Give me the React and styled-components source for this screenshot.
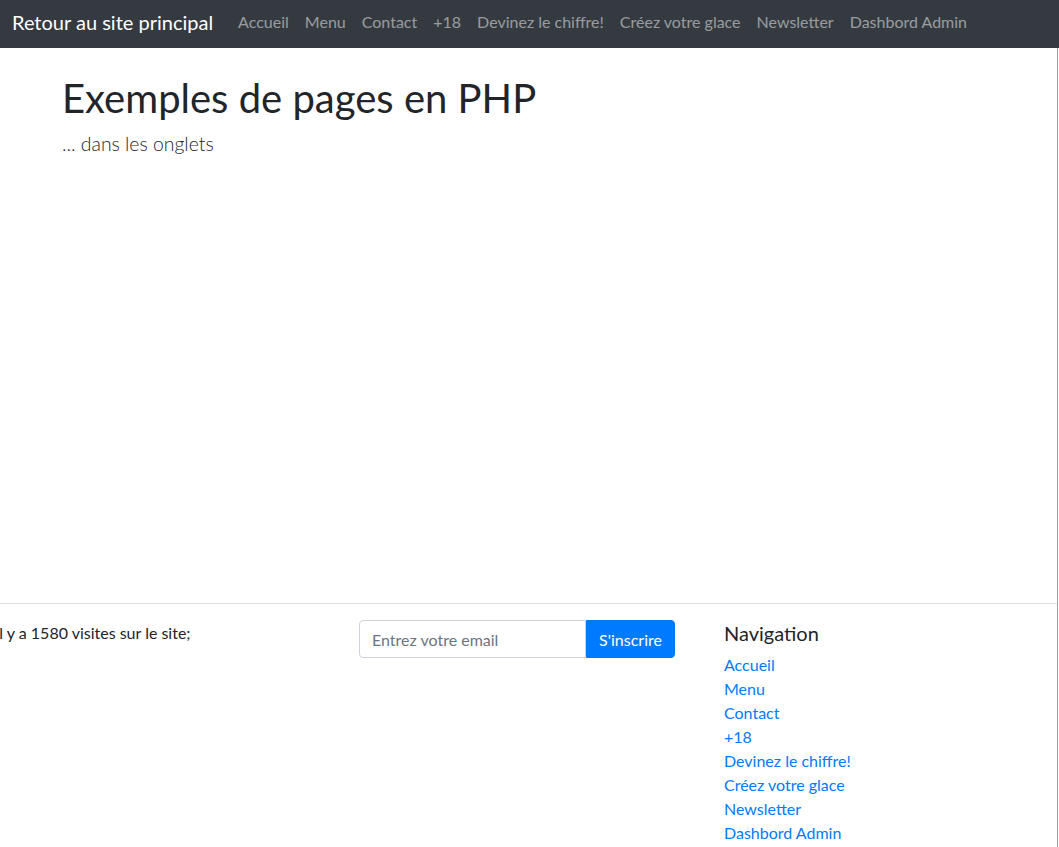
import React from "react";
import styled, { createGlobalStyle } from "styled-components";

const COLORS = {
  DARK: "#343a40",
  TEXT: "#212529",
  MUTED_LINK: "rgba(255, 255, 255, 0.5)",
  PRIMARY: "#007bff",
  BORDER: "#dee2e6",
  INPUT_BORDER: "#ced4da",
  PLACEHOLDER: "#6c757d",
};

const FONT = `Lato, "Liberation Sans", sans-serif`;

const NAV_ITEMS = [
  "Accueil",
  "Menu",
  "Contact",
  "+18",
  "Devinez le chiffre!",
  "Créez votre glace",
  "Newsletter",
  "Dashbord Admin",
];

const GlobalStyle = createGlobalStyle`
  html, body {
    margin: 0;
    padding: 0;
    background: #fff;
  }
  body {
    font-family: ${FONT};
    font-size: 16px;
    line-height: 1.5;
    color: ${COLORS.TEXT};
    overflow: hidden;
  }
  * {
    box-sizing: border-box;
  }
`;

const Navbar = styled.nav`
  display: flex;
  align-items: center;
  height: 48px;
  padding: 0 12px;
  background-color: ${COLORS.DARK};
`;

const Brand = styled.a`
  font-size: 20px;
  line-height: 30px;
  color: #fff;
  margin-right: 17px;
  margin-top: -5px;
  text-decoration: none;
`;

const NavList = styled.ul`
  display: flex;
  list-style: none;
  margin: -5px 0 0;
  padding: 0;
`;

const NavLink = styled.a`
  display: block;
  padding: 0 8px;
  font-size: 16px;
  line-height: 24px;
  color: ${COLORS.MUTED_LINK};
  text-decoration: none;
`;

const PageBody = styled.div`
  width: 1058px;
  border-right: 1px solid #a0a0a0;
  overflow: hidden;
`;

const Main = styled.main`
  height: 555px;
  padding: 26px 0 0 62px;
`;

const Title = styled.h1`
  margin: 0 0 7px;
  font-size: 40px;
  font-weight: 400;
  line-height: 1.2;
`;

const Lead = styled.p`
  margin: 0;
  font-size: 19.4px;
  font-weight: 300;
  line-height: 1.5;
`;

const Footer = styled.footer`
  border-top: 1px solid ${COLORS.BORDER};
  padding-top: 16px;
  height: 244px;
`;

const FooterRow = styled.div`
  display: grid;
  grid-template-columns: 365px 364px 365px;
  margin-left: -20px;
`;

const FooterCol = styled.div`
  padding: ${({ $shift }) => ($shift ? "1px" : "0")} 15px 0;
`;

const Visits = styled.p`
  margin: 0;
  white-space: nowrap;
`;

const InputGroup = styled.form`
  display: flex;
  margin-left: -1px;
`;

const EmailInput = styled.input`
  width: 227px;
  height: 38px;
  padding: 6px 12px;
  font-family: ${FONT};
  font-size: 16px;
  color: ${COLORS.TEXT};
  border: 1px solid ${COLORS.INPUT_BORDER};
  border-radius: 4px 0 0 4px;
  outline: none;

  &::placeholder {
    color: ${COLORS.PLACEHOLDER};
    opacity: 1;
  }
`;

const SubmitButton = styled.button`
  width: 89px;
  height: 38px;
  padding: 6px 12px;
  font-family: ${FONT};
  font-size: 16px;
  color: #fff;
  background-color: ${COLORS.PRIMARY};
  border: 1px solid ${COLORS.PRIMARY};
  border-radius: 0 4px 4px 0;
  cursor: pointer;
`;

const FooterHeading = styled.h5`
  margin: 0 0 8px;
  font-size: 20px;
  font-weight: 400;
  line-height: 1.2;
`;

const LinkList = styled.ul`
  list-style: none;
  margin: 0;
  padding: 0;
`;

const FooterLink = styled.a`
  color: ${COLORS.PRIMARY};
  text-decoration: none;
`;

function App() {
  return (
    <>
      <GlobalStyle />
      <Navbar>
        <Brand href="#">Retour au site principal</Brand>
        <NavList>
          {NAV_ITEMS.map((item) => (
            <li key={item}>
              <NavLink href="#">{item}</NavLink>
            </li>
          ))}
        </NavList>
      </Navbar>
      <PageBody>
        <Main>
          <Title>Exemples de pages en PHP</Title>
          <Lead>... dans les onglets</Lead>
        </Main>
        <Footer>
          <FooterRow>
            <FooterCol $shift>
              <Visits>Il y a 1580 visites sur le site;</Visits>
            </FooterCol>
            <FooterCol>
              <InputGroup onSubmit={(e) => e.preventDefault()}>
                <EmailInput type="email" placeholder="Entrez votre email" />
                <SubmitButton type="submit">S'inscrire</SubmitButton>
              </InputGroup>
            </FooterCol>
            <FooterCol $shift>
              <FooterHeading>Navigation</FooterHeading>
              <LinkList>
                {NAV_ITEMS.map((item) => (
                  <li key={item}>
                    <FooterLink href="#">{item}</FooterLink>
                  </li>
                ))}
              </LinkList>
            </FooterCol>
          </FooterRow>
        </Footer>
      </PageBody>
    </>
  );
}

export default App;
